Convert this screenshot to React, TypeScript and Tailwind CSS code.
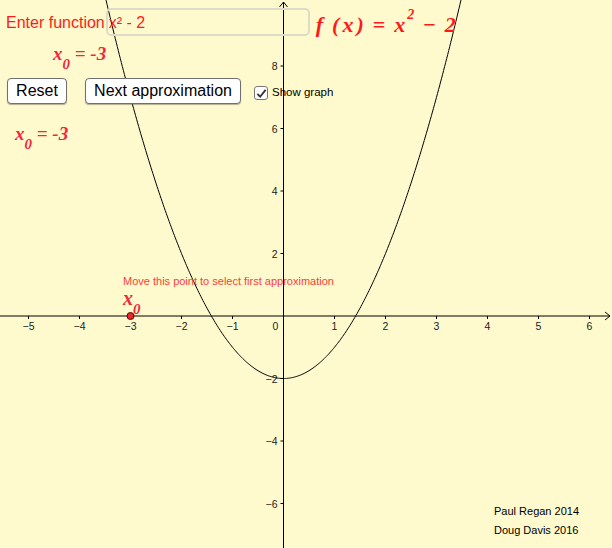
import React from 'react';

const OX = 283.5;
const OY = 316;
const SX = 51;
const SY = 31.25;

const px = (x: number) => OX + x * SX;
const py = (y: number) => OY - y * SY;

function curvePath() {
  const pts: string[] = [];
  for (let x = -3.7; x <= 3.7; x += 0.02) {
    pts.push(`${px(x).toFixed(2)},${py(x * x - 2).toFixed(2)}`);
  }
  return 'M' + pts.join(' L');
}

function Graph() {
  const xs = [-5, -4, -3, -2, -1, 1, 2, 3, 4, 5, 6];
  const ys = [-6, -4, -2, 2, 4, 6, 8];
  return (
    <svg className="absolute inset-0" width="612" height="548" viewBox="0 0 612 548">
      {/* axes */}
      <line x1="0" y1={OY} x2="610" y2={OY} stroke="#000" strokeWidth="1" />
      <line x1={OX} y1="2" x2={OX} y2="548" stroke="#000" strokeWidth="1" />
      <path d={`M605,${OY - 4} L610,${OY} L605,${OY + 4}`} fill="none" stroke="#000" />
      <path d={`M${OX - 4},7 L${OX},2 L${OX + 4},7`} fill="none" stroke="#000" />
      {xs.map((v) => (
        <g key={v}>
          <line x1={px(v)} y1={OY} x2={px(v)} y2={OY + 3} stroke="#000" />
          <text x={px(v)} y={OY + 14} textAnchor="middle" fontSize="10.5" fontFamily="'Liberation Sans', Arial, sans-serif" fill="#222">
            {v < 0 ? `\u2212${-v}` : v}
          </text>
        </g>
      ))}
      <text x={OX - 8} y={OY + 14} textAnchor="middle" fontSize="10.5" fontFamily="'Liberation Sans', Arial, sans-serif" fill="#222">0</text>
      {ys.map((v) => (
        <g key={v}>
          <line x1={OX - 3} y1={py(v)} x2={OX} y2={py(v)} stroke="#000" />
          <text x={OX - 6} y={py(v) + 4} textAnchor="end" fontSize="10.5" fontFamily="'Liberation Sans', Arial, sans-serif" fill="#222">
            {v < 0 ? `\u2212${-v}` : v}
          </text>
        </g>
      ))}
      <path d={curvePath()} fill="none" stroke="#000" strokeWidth="1" />
      <circle cx={px(-3)} cy={OY} r="3.5" fill="#e8262c" stroke="#5a0000" strokeWidth="1" />
    </svg>
  );
}

const serif = { fontFamily: "'Liberation Serif', 'Times New Roman', serif" };

function X0({ className }: { className: string }) {
  return (
    <div className={`absolute text-[#f0283c] font-bold italic text-[19px] leading-none ${className}`} style={serif}>
      x<sub className="text-[15px] align-[-5px]">0</sub> = -3
    </div>
  );
}

export default function App() {
  return (
    <div className="relative w-[612px] h-[548px] overflow-hidden bg-[#fffacd] select-none" style={{ fontFamily: "'Liberation Sans', Arial, sans-serif" }}>
      <Graph />

      {/* input row */}
      <div className="absolute left-[6px] top-[8px] flex items-center">
        <span className="mt-[2px] text-[16px] text-[#ff1a1a] leading-none">Enter function</span>
        <div className="ml-[1px] w-[204px] h-[28px] rounded-[5px] border-2 border-[#dedcc8] flex items-center px-[1px]">
          <span className="mt-[2px] text-[16px] text-[#ff1a1a] leading-none">x² - 2</span>
        </div>
        <div className="ml-[6px] mt-[5px] flex items-baseline gap-[9px] text-[22px] font-bold italic text-[#ff1a1a] leading-none" style={serif}>
          <span>f</span>
          <span className="flex gap-[3px]">
            <span>(</span>
            <span>x</span>
            <span>)</span>
          </span>
          <span className="not-italic">=</span>
          <span>
            x<sup className="ml-[2px] text-[14px] align-[6px]">2</sup>
          </span>
          <span className="not-italic">−</span>
          <span>2</span>
        </div>
      </div>

      <X0 className="left-[53px] top-[44px]" />
      <X0 className="left-[15px] top-[124px]" />

      {/* controls */}
      <div className="absolute left-[7px] top-[78px] flex items-center gap-[18px]">
        <button className="w-[60px] h-[26px] bg-white border border-[#707070] rounded-[4px] text-[16px] text-black leading-none shadow-[0_1px_1px_rgba(0,0,0,0.3)]">
          Reset
        </button>
        <button className="w-[156px] h-[26px] bg-white border border-[#707070] rounded-[4px] text-[16px] text-black leading-none shadow-[0_1px_1px_rgba(0,0,0,0.3)]">
          Next approximation
        </button>
        <label className="-ml-[5px] mt-[4px] flex items-center gap-[4px]">
          <div className="w-[14px] h-[14px] rounded-[3px] border border-[#777] bg-white flex items-center justify-center">
            <svg width="11" height="11" viewBox="0 0 12 12">
              <path d="M1.5 6.5 L4.5 9.5 L10.5 2" fill="none" stroke="#333" strokeWidth="2" />
            </svg>
          </div>
          <span className="text-[11.5px] text-black leading-none">Show graph</span>
        </label>
      </div>

      {/* point caption */}
      <div className="absolute left-[123px] top-[276px] flex flex-col gap-[1px] text-[#f0283c]">
        <span className="text-[11px] text-[#ff3a3a] leading-none">Move this point to select first approximation</span>
        <span className="font-bold italic text-[20px] leading-none" style={serif}>
          x<sub className="text-[15px] align-[-5px]">0</sub>
        </span>
      </div>

      {/* credits */}
      <div className="absolute left-[494px] top-[506px] flex flex-col gap-[8px] text-[11px] text-black leading-none">
        <span>Paul Regan 2014</span>
        <span>Doug Davis 2016</span>
      </div>
    </div>
  );
}
